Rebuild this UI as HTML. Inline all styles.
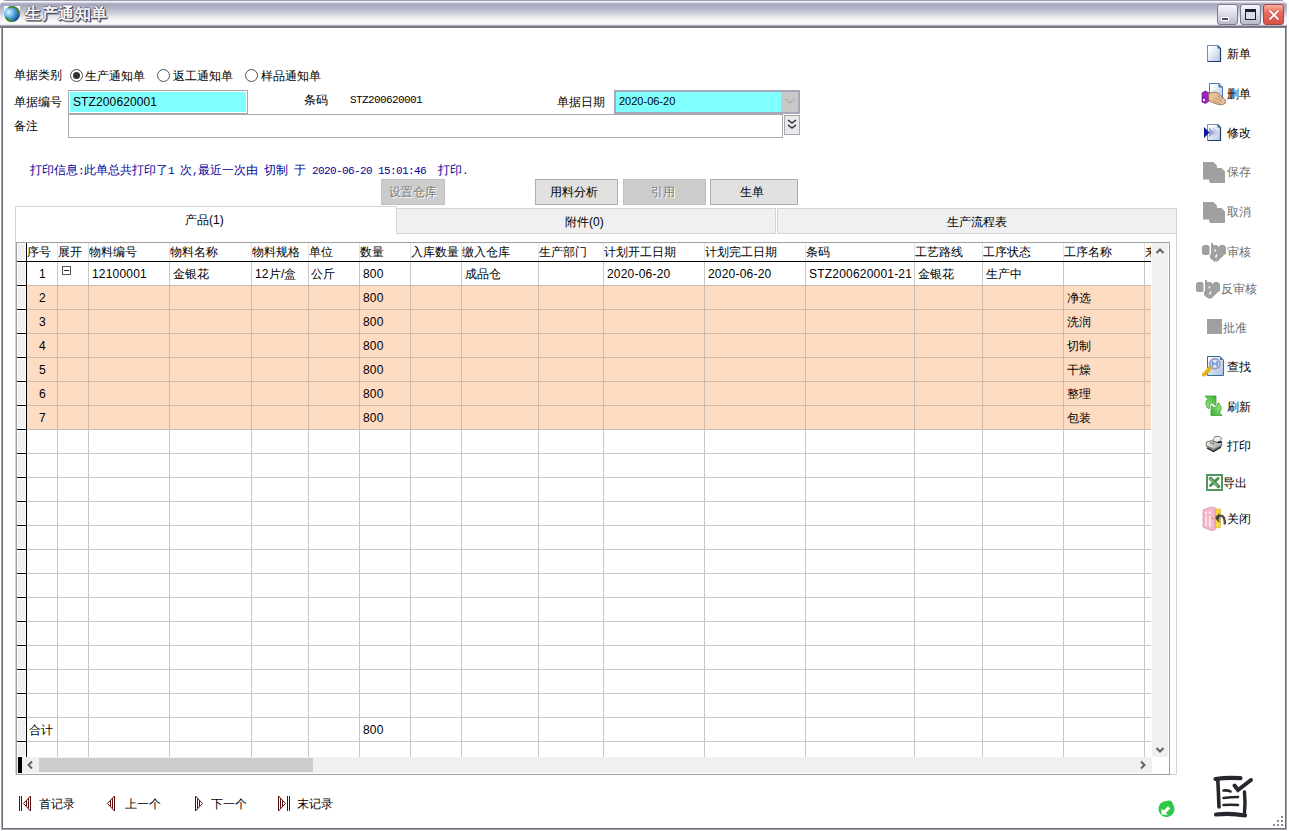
<!DOCTYPE html><html><head><meta charset="utf-8"><style>
html,body{margin:0;padding:0;width:1289px;height:831px;overflow:hidden;background:#fff}
body{position:relative;font-family:"Liberation Sans",sans-serif;font-size:12px;line-height:12px;color:#000}
body div{position:absolute;box-sizing:border-box}
.t{white-space:nowrap}
.m{font-family:"Liberation Mono",monospace;font-size:11px;letter-spacing:-0.6px}
svg{position:absolute;overflow:visible}
</style></head><body>
<div style="left:0px;top:0px;width:1287px;height:28px;background:linear-gradient(to bottom,#9c9caf 0.5px,#f6f6fa 1.5px,#d6d6e0 2.5px,#b6b6ca 3.5px,#a7a7bf 4.5px,#a9a9c0 5.5px,#adafc3 6.5px,#b3b6c9 8.5px,#bdc0cf 10.5px,#c9cbd7 12.5px,#d6d7df 14.5px,#e4e4ea 16.5px,#eeeef2 18.5px,#f6f6f7 20.5px,#fafafa 23.5px,#ebebef 24.5px,#b4b4c0 25.5px,#727282 26.5px,#7c7c8a 27.5px);border-radius:6px 6px 0 0"></div>
<div style="left:1px;top:28px;width:1px;height:802px;background:#a4a4b0"></div>
<div style="left:2px;top:27px;width:1px;height:802px;background:#6c6c7a"></div>
<div style="left:1285px;top:27px;width:1px;height:802px;background:#6c6c7a"></div>
<div style="left:1286px;top:28px;width:1px;height:802px;background:#a4a4b0"></div>
<div style="left:2px;top:828px;width:1284px;height:1px;background:#6c6c7a"></div>
<div style="left:1px;top:829px;width:1286px;height:1px;background:#a4a4b0"></div>
<svg style="left:4px;top:6px" width="16" height="16" viewBox="0 0 16 16">
<defs><radialGradient id="gl" cx="0.3" cy="0.38" r="0.75"><stop offset="0" stop-color="#dcf4ff"/><stop offset="0.5" stop-color="#4aa2e2"/><stop offset="1" stop-color="#0c3c7c"/></radialGradient></defs>
<rect x="0" y="0" width="16" height="16" fill="#fff"/>
<circle cx="8" cy="8" r="8" fill="url(#gl)"/>
<path d="M4.5 2 A6.9 6.9 0 0 1 14.9 8" stroke="#4a8a24" stroke-width="2" fill="none" opacity="0.9"/>
<path d="M1.8 11 A6.9 6.9 0 0 0 9 14.9" stroke="#4a8a24" stroke-width="2" fill="none" opacity="0.9"/>
</svg>
<div class="t" style="left:25px;top:6px;font-size:16px;line-height:16px;letter-spacing:0.6px;color:#fff;font-weight:normal;-webkit-text-stroke:0.5px #fff;text-shadow:1px 1px 0 #3c3c4c,1px 0 0 #3c3c4c,0 1px 0 #3c3c4c,-1px 0 0 #6a6a7a,0 -1px 0 #6a6a7a,2px 1px 0 #8a8a9a,1px 2px 0 #8a8a9a">生产通知单</div>
<div style="left:1217px;top:4px;width:21px;height:21px;border:1px solid #7a7a90;border-radius:3px;background:linear-gradient(to bottom,#f8f8fc,#dcdce8 50%,#b8b8cc)"><div style="left:3px;top:12px;width:6px;height:2px;background:#4a4a68;border:1px solid #fff;box-sizing:content-box"></div></div>
<div style="left:1240px;top:4px;width:21px;height:21px;border:1px solid #7a7a90;border-radius:3px;background:linear-gradient(to bottom,#f8f8fc,#dcdce8 50%,#b8b8cc)"><div style="left:4px;top:4px;width:11px;height:11px;border:1px solid #1a1a30;border-top-width:3px;background:#dcdce6"></div></div>
<div style="left:1263px;top:4px;width:21px;height:21px;border:1px solid #a04848;border-radius:3px;background:linear-gradient(to bottom,#ffb0a0,#e86a5c 40%,#d85048)"><svg style="left:3px;top:3px" width="14" height="14"><path d="M2.5 2.5 L11.5 11.5 M11.5 2.5 L2.5 11.5" stroke="#6a2020" stroke-width="3" opacity="0.35"/><path d="M2.5 2.5 L11.5 11.5 M11.5 2.5 L2.5 11.5" stroke="#fff" stroke-width="1.8"/></svg></div>
<div class="t" style="left:14px;top:69px;">单据类别</div>
<div style="left:70px;top:69px;width:13px;height:13px;border-radius:50%;border:1.2px solid #505050;background:#fff"><div style="left:2px;top:2px;width:7px;height:7px;border-radius:50%;background:#333"></div></div>
<div class="t" style="left:85px;top:70px;">生产通知单</div>
<div style="left:157px;top:69px;width:13px;height:13px;border-radius:50%;border:1.2px solid #505050;background:#fff"></div>
<div class="t" style="left:173px;top:70px;">返工通知单</div>
<div style="left:245px;top:69px;width:13px;height:13px;border-radius:50%;border:1.2px solid #505050;background:#fff"></div>
<div class="t" style="left:261px;top:70px;">样品通知单</div>
<div class="t" style="left:14px;top:96px;">单据编号</div>
<div style="left:68px;top:90px;width:180px;height:25px;background:#80ffff;border:1px solid #a8a8a8;border-bottom:2px solid #a8a8a8;box-shadow:inset 1px 1px 0 #fff,inset -1px -1px 0 #fff"></div>
<div class="t" style="left:73px;top:96px;letter-spacing:0.12px">STZ200620001</div>
<div class="t" style="left:304px;top:94px;">条码</div>
<div class="t" style="left:350px;top:93px;"><span class="m">STZ200620001</span></div>
<div class="t" style="left:557px;top:96px;">单据日期</div>
<div style="left:614px;top:90px;width:186px;height:24px;background:#80ffff;border:2px solid #a4a8b8"></div>
<div style="left:781px;top:92px;width:17px;height:20px;background:#c8c8c8"></div>
<svg style="left:784px;top:96px" width="12" height="10"><path d="M1 3 L6 7 L11 3" stroke="#a0a0a0" fill="none" stroke-width="1"/></svg>
<div class="t" style="left:619px;top:96px;font-size:11px;line-height:11px">2020-06-20</div>
<div class="t" style="left:14px;top:120px;">备注</div>
<div style="left:68px;top:114px;width:715px;height:24px;background:#fff;border:1px solid #a8a8a8"></div>
<div style="left:784px;top:115px;width:16px;height:20px;background:#e8e8ee;border:1px solid #a8a8a8"></div>
<svg style="left:786px;top:118px" width="12" height="14"><path d="M2 2 L6 5 L10 2 M2 7 L6 10 L10 7" stroke="#333" fill="none" stroke-width="1.5"/></svg>
<div class="t" style="left:30px;top:164px;color:#00009a">打印信息</div>
<div class="t" style="left:78px;top:164px;color:#00009a"><span class="m">:</span></div>
<div class="t" style="left:84px;top:164px;color:#00009a">此单总共打印了</div>
<div class="t" style="left:168px;top:164px;color:#00009a"><span class="m">1 </span></div>
<div class="t" style="left:180px;top:164px;color:#00009a">次</div>
<div class="t" style="left:192px;top:164px;color:#00009a"><span class="m">,</span></div>
<div class="t" style="left:198px;top:164px;color:#00009a">最近一次由</div>
<div class="t" style="left:264px;top:164px;color:#00009a">切制</div>
<div class="t" style="left:294px;top:164px;color:#00009a">于</div>
<div class="t" style="left:312px;top:164px;color:#00009a"><span class="m">2020-06-20</span></div>
<div class="t" style="left:378px;top:164px;color:#00009a"><span class="m">15:01:46</span></div>
<div class="t" style="left:438px;top:164px;color:#00009a">打印</div>
<div class="t" style="left:462px;top:164px;color:#00009a"><span class="m">.</span></div>
<div style="left:381px;top:179px;width:64px;height:26px;background:#cccccc;border:1px solid #bfbfbf"></div>
<div class="t" style="left:389px;top:186px;color:#7a7a7a;text-shadow:1px 1px #fff">设置仓库</div>
<div style="left:535px;top:179px;width:83px;height:26px;background:#e1e1e1;border:1px solid #adadad"></div>
<div class="t" style="left:550px;top:186px;">用料分析</div>
<div style="left:623px;top:179px;width:83px;height:26px;background:#cccccc;border:1px solid #bfbfbf"></div>
<div class="t" style="left:651px;top:186px;color:#7a7a7a;text-shadow:1px 1px #fff">引用</div>
<div style="left:710px;top:179px;width:88px;height:26px;background:#e1e1e1;border:1px solid #adadad"></div>
<div class="t" style="left:740px;top:186px;">生单</div>
<div style="left:15px;top:206px;width:382px;height:28px;background:#fff;border:1px solid #d4d4d4;border-bottom:none"></div>
<div style="left:396px;top:208px;width:380px;height:26px;background:#f0f0f0;border:1px solid #d4d4d4"></div>
<div style="left:777px;top:208px;width:400px;height:26px;background:#f0f0f0;border:1px solid #d4d4d4"></div>
<div style="left:15px;top:234px;width:1162px;height:541px;border:1px solid #d4d4d4;border-top:none"></div>
<div class="t" style="left:185px;top:214px;">产品(1)</div>
<div class="t" style="left:565px;top:216px;">附件(0)</div>
<div class="t" style="left:947px;top:216px;">生产流程表</div>
<div style="left:16px;top:242px;width:1154px;height:533px;border:1px solid #a0a0a0;background:#fff"></div>
<div style="left:27px;top:285px;width:1124px;height:145px;background:#fddcc2"></div>
<div style="left:27px;top:285px;width:1124px;height:1px;background:#ccbcb0"></div>
<div style="left:27px;top:309px;width:1124px;height:1px;background:#ccbcb0"></div>
<div style="left:27px;top:333px;width:1124px;height:1px;background:#ccbcb0"></div>
<div style="left:27px;top:357px;width:1124px;height:1px;background:#ccbcb0"></div>
<div style="left:27px;top:381px;width:1124px;height:1px;background:#ccbcb0"></div>
<div style="left:27px;top:405px;width:1124px;height:1px;background:#ccbcb0"></div>
<div style="left:27px;top:429px;width:1124px;height:1px;background:#ccbcb0"></div>
<div style="left:27px;top:453px;width:1124px;height:1px;background:#c8c8c8"></div>
<div style="left:27px;top:477px;width:1124px;height:1px;background:#c8c8c8"></div>
<div style="left:27px;top:501px;width:1124px;height:1px;background:#c8c8c8"></div>
<div style="left:27px;top:525px;width:1124px;height:1px;background:#c8c8c8"></div>
<div style="left:27px;top:549px;width:1124px;height:1px;background:#c8c8c8"></div>
<div style="left:27px;top:573px;width:1124px;height:1px;background:#c8c8c8"></div>
<div style="left:27px;top:597px;width:1124px;height:1px;background:#c8c8c8"></div>
<div style="left:27px;top:621px;width:1124px;height:1px;background:#c8c8c8"></div>
<div style="left:27px;top:645px;width:1124px;height:1px;background:#c8c8c8"></div>
<div style="left:27px;top:669px;width:1124px;height:1px;background:#c8c8c8"></div>
<div style="left:27px;top:693px;width:1124px;height:1px;background:#c8c8c8"></div>
<div style="left:27px;top:717px;width:1124px;height:1px;background:#c8c8c8"></div>
<div style="left:27px;top:741px;width:1124px;height:1px;background:#c8c8c8"></div>
<div style="left:57px;top:262px;width:1px;height:23px;background:#c8c8c8"></div>
<div style="left:57px;top:285px;width:1px;height:145px;background:#ccbcb0"></div>
<div style="left:57px;top:430px;width:1px;height:327px;background:#c8c8c8"></div>
<div style="left:57px;top:243px;width:1px;height:18px;background:#e4e4e4"></div>
<div style="left:88px;top:262px;width:1px;height:23px;background:#c8c8c8"></div>
<div style="left:88px;top:285px;width:1px;height:145px;background:#ccbcb0"></div>
<div style="left:88px;top:430px;width:1px;height:327px;background:#c8c8c8"></div>
<div style="left:88px;top:243px;width:1px;height:18px;background:#e4e4e4"></div>
<div style="left:169px;top:262px;width:1px;height:23px;background:#c8c8c8"></div>
<div style="left:169px;top:285px;width:1px;height:145px;background:#ccbcb0"></div>
<div style="left:169px;top:430px;width:1px;height:327px;background:#c8c8c8"></div>
<div style="left:169px;top:243px;width:1px;height:18px;background:#e4e4e4"></div>
<div style="left:251px;top:262px;width:1px;height:23px;background:#c8c8c8"></div>
<div style="left:251px;top:285px;width:1px;height:145px;background:#ccbcb0"></div>
<div style="left:251px;top:430px;width:1px;height:327px;background:#c8c8c8"></div>
<div style="left:251px;top:243px;width:1px;height:18px;background:#e4e4e4"></div>
<div style="left:308px;top:262px;width:1px;height:23px;background:#c8c8c8"></div>
<div style="left:308px;top:285px;width:1px;height:145px;background:#ccbcb0"></div>
<div style="left:308px;top:430px;width:1px;height:327px;background:#c8c8c8"></div>
<div style="left:308px;top:243px;width:1px;height:18px;background:#e4e4e4"></div>
<div style="left:359px;top:262px;width:1px;height:23px;background:#c8c8c8"></div>
<div style="left:359px;top:285px;width:1px;height:145px;background:#ccbcb0"></div>
<div style="left:359px;top:430px;width:1px;height:327px;background:#c8c8c8"></div>
<div style="left:359px;top:243px;width:1px;height:18px;background:#e4e4e4"></div>
<div style="left:410px;top:262px;width:1px;height:23px;background:#c8c8c8"></div>
<div style="left:410px;top:285px;width:1px;height:145px;background:#ccbcb0"></div>
<div style="left:410px;top:430px;width:1px;height:327px;background:#c8c8c8"></div>
<div style="left:410px;top:243px;width:1px;height:18px;background:#e4e4e4"></div>
<div style="left:461px;top:262px;width:1px;height:23px;background:#c8c8c8"></div>
<div style="left:461px;top:285px;width:1px;height:145px;background:#ccbcb0"></div>
<div style="left:461px;top:430px;width:1px;height:327px;background:#c8c8c8"></div>
<div style="left:461px;top:243px;width:1px;height:18px;background:#e4e4e4"></div>
<div style="left:538px;top:262px;width:1px;height:23px;background:#c8c8c8"></div>
<div style="left:538px;top:285px;width:1px;height:145px;background:#ccbcb0"></div>
<div style="left:538px;top:430px;width:1px;height:327px;background:#c8c8c8"></div>
<div style="left:538px;top:243px;width:1px;height:18px;background:#e4e4e4"></div>
<div style="left:603px;top:262px;width:1px;height:23px;background:#c8c8c8"></div>
<div style="left:603px;top:285px;width:1px;height:145px;background:#ccbcb0"></div>
<div style="left:603px;top:430px;width:1px;height:327px;background:#c8c8c8"></div>
<div style="left:603px;top:243px;width:1px;height:18px;background:#e4e4e4"></div>
<div style="left:704px;top:262px;width:1px;height:23px;background:#c8c8c8"></div>
<div style="left:704px;top:285px;width:1px;height:145px;background:#ccbcb0"></div>
<div style="left:704px;top:430px;width:1px;height:327px;background:#c8c8c8"></div>
<div style="left:704px;top:243px;width:1px;height:18px;background:#e4e4e4"></div>
<div style="left:805px;top:262px;width:1px;height:23px;background:#c8c8c8"></div>
<div style="left:805px;top:285px;width:1px;height:145px;background:#ccbcb0"></div>
<div style="left:805px;top:430px;width:1px;height:327px;background:#c8c8c8"></div>
<div style="left:805px;top:243px;width:1px;height:18px;background:#e4e4e4"></div>
<div style="left:914px;top:262px;width:1px;height:23px;background:#c8c8c8"></div>
<div style="left:914px;top:285px;width:1px;height:145px;background:#ccbcb0"></div>
<div style="left:914px;top:430px;width:1px;height:327px;background:#c8c8c8"></div>
<div style="left:914px;top:243px;width:1px;height:18px;background:#e4e4e4"></div>
<div style="left:982px;top:262px;width:1px;height:23px;background:#c8c8c8"></div>
<div style="left:982px;top:285px;width:1px;height:145px;background:#ccbcb0"></div>
<div style="left:982px;top:430px;width:1px;height:327px;background:#c8c8c8"></div>
<div style="left:982px;top:243px;width:1px;height:18px;background:#e4e4e4"></div>
<div style="left:1063px;top:262px;width:1px;height:23px;background:#c8c8c8"></div>
<div style="left:1063px;top:285px;width:1px;height:145px;background:#ccbcb0"></div>
<div style="left:1063px;top:430px;width:1px;height:327px;background:#c8c8c8"></div>
<div style="left:1063px;top:243px;width:1px;height:18px;background:#e4e4e4"></div>
<div style="left:1144px;top:262px;width:1px;height:23px;background:#c8c8c8"></div>
<div style="left:1144px;top:285px;width:1px;height:145px;background:#ccbcb0"></div>
<div style="left:1144px;top:430px;width:1px;height:327px;background:#c8c8c8"></div>
<div style="left:1144px;top:243px;width:1px;height:18px;background:#e4e4e4"></div>
<div style="left:17px;top:261px;width:1134px;height:1px;background:#000"></div>
<div style="left:26px;top:243px;width:1px;height:514px;background:#000"></div>
<div style="left:17px;top:243px;width:9px;height:18px;background:#efefef;border:1px solid #fff"></div>
<div style="left:17px;top:262px;width:9px;height:23px;background:#efefef;border:1px solid #fff"></div>
<div style="left:17px;top:285px;width:9px;height:1px;background:#000"></div>
<div style="left:17px;top:286px;width:9px;height:23px;background:#efefef;border:1px solid #fff"></div>
<div style="left:17px;top:309px;width:9px;height:1px;background:#000"></div>
<div style="left:17px;top:310px;width:9px;height:23px;background:#efefef;border:1px solid #fff"></div>
<div style="left:17px;top:333px;width:9px;height:1px;background:#000"></div>
<div style="left:17px;top:334px;width:9px;height:23px;background:#efefef;border:1px solid #fff"></div>
<div style="left:17px;top:357px;width:9px;height:1px;background:#000"></div>
<div style="left:17px;top:358px;width:9px;height:23px;background:#efefef;border:1px solid #fff"></div>
<div style="left:17px;top:381px;width:9px;height:1px;background:#000"></div>
<div style="left:17px;top:382px;width:9px;height:23px;background:#efefef;border:1px solid #fff"></div>
<div style="left:17px;top:405px;width:9px;height:1px;background:#000"></div>
<div style="left:17px;top:406px;width:9px;height:23px;background:#efefef;border:1px solid #fff"></div>
<div style="left:17px;top:429px;width:9px;height:1px;background:#000"></div>
<div style="left:17px;top:430px;width:9px;height:23px;background:#efefef;border:1px solid #fff"></div>
<div style="left:17px;top:453px;width:9px;height:1px;background:#000"></div>
<div style="left:17px;top:454px;width:9px;height:23px;background:#efefef;border:1px solid #fff"></div>
<div style="left:17px;top:477px;width:9px;height:1px;background:#000"></div>
<div style="left:17px;top:478px;width:9px;height:23px;background:#efefef;border:1px solid #fff"></div>
<div style="left:17px;top:501px;width:9px;height:1px;background:#000"></div>
<div style="left:17px;top:502px;width:9px;height:23px;background:#efefef;border:1px solid #fff"></div>
<div style="left:17px;top:525px;width:9px;height:1px;background:#000"></div>
<div style="left:17px;top:526px;width:9px;height:23px;background:#efefef;border:1px solid #fff"></div>
<div style="left:17px;top:549px;width:9px;height:1px;background:#000"></div>
<div style="left:17px;top:550px;width:9px;height:23px;background:#efefef;border:1px solid #fff"></div>
<div style="left:17px;top:573px;width:9px;height:1px;background:#000"></div>
<div style="left:17px;top:574px;width:9px;height:23px;background:#efefef;border:1px solid #fff"></div>
<div style="left:17px;top:597px;width:9px;height:1px;background:#000"></div>
<div style="left:17px;top:598px;width:9px;height:23px;background:#efefef;border:1px solid #fff"></div>
<div style="left:17px;top:621px;width:9px;height:1px;background:#000"></div>
<div style="left:17px;top:622px;width:9px;height:23px;background:#efefef;border:1px solid #fff"></div>
<div style="left:17px;top:645px;width:9px;height:1px;background:#000"></div>
<div style="left:17px;top:646px;width:9px;height:23px;background:#efefef;border:1px solid #fff"></div>
<div style="left:17px;top:669px;width:9px;height:1px;background:#000"></div>
<div style="left:17px;top:670px;width:9px;height:23px;background:#efefef;border:1px solid #fff"></div>
<div style="left:17px;top:693px;width:9px;height:1px;background:#000"></div>
<div style="left:17px;top:694px;width:9px;height:23px;background:#efefef;border:1px solid #fff"></div>
<div style="left:17px;top:717px;width:9px;height:1px;background:#000"></div>
<div style="left:17px;top:718px;width:9px;height:23px;background:#efefef;border:1px solid #fff"></div>
<div style="left:17px;top:741px;width:9px;height:1px;background:#000"></div>
<div style="left:17px;top:742px;width:9px;height:15px;background:#efefef;border:1px solid #fff"></div>
<div class="t" style="left:27px;top:246px;overflow:hidden">序号</div>
<div class="t" style="left:58px;top:246px;overflow:hidden">展开</div>
<div class="t" style="left:89px;top:246px;overflow:hidden">物料编号</div>
<div class="t" style="left:170px;top:246px;overflow:hidden">物料名称</div>
<div class="t" style="left:252px;top:246px;overflow:hidden">物料规格</div>
<div class="t" style="left:309px;top:246px;overflow:hidden">单位</div>
<div class="t" style="left:360px;top:246px;overflow:hidden">数量</div>
<div class="t" style="left:411px;top:246px;overflow:hidden">入库数量</div>
<div class="t" style="left:462px;top:246px;overflow:hidden">缴入仓库</div>
<div class="t" style="left:539px;top:246px;overflow:hidden">生产部门</div>
<div class="t" style="left:604px;top:246px;overflow:hidden">计划开工日期</div>
<div class="t" style="left:705px;top:246px;overflow:hidden">计划完工日期</div>
<div class="t" style="left:806px;top:246px;overflow:hidden">条码</div>
<div class="t" style="left:915px;top:246px;overflow:hidden">工艺路线</div>
<div class="t" style="left:983px;top:246px;overflow:hidden">工序状态</div>
<div class="t" style="left:1064px;top:246px;overflow:hidden">工序名称</div>
<div class="t" style="left:1145px;top:246px;overflow:hidden">来</div>
<div class="t" style="left:39px;top:268px;">1</div>
<div style="left:62px;top:266px;width:9px;height:9px;border:1px solid #555;background:#fff"></div>
<div style="left:64px;top:270px;width:5px;height:1px;background:#222"></div>
<div class="t" style="left:92px;top:268px;letter-spacing:0.2px;">12100001</div>
<div class="t" style="left:173px;top:268px;letter-spacing:0.2px;">金银花</div>
<div class="t" style="left:255px;top:268px;letter-spacing:0.2px;">12片/盒</div>
<div class="t" style="left:311px;top:268px;letter-spacing:0.2px;">公斤</div>
<div class="t" style="left:363px;top:268px;letter-spacing:0.2px;">800</div>
<div class="t" style="left:465px;top:268px;letter-spacing:0.2px;">成品仓</div>
<div class="t" style="left:607px;top:268px;letter-spacing:0.2px;">2020-06-20</div>
<div class="t" style="left:708px;top:268px;letter-spacing:0.2px;">2020-06-20</div>
<div class="t" style="left:809px;top:268px;letter-spacing:0.2px;">STZ200620001-21</div>
<div class="t" style="left:918px;top:268px;letter-spacing:0.2px;">金银花</div>
<div class="t" style="left:986px;top:268px;letter-spacing:0.2px;">生产中</div>
<div class="t" style="left:39px;top:292px;">2</div>
<div class="t" style="left:363px;top:292px;letter-spacing:0.2px;">800</div>
<div class="t" style="left:1067px;top:292px;letter-spacing:0.2px;">净选</div>
<div class="t" style="left:39px;top:316px;">3</div>
<div class="t" style="left:363px;top:316px;letter-spacing:0.2px;">800</div>
<div class="t" style="left:1067px;top:316px;letter-spacing:0.2px;">洗润</div>
<div class="t" style="left:39px;top:340px;">4</div>
<div class="t" style="left:363px;top:340px;letter-spacing:0.2px;">800</div>
<div class="t" style="left:1067px;top:340px;letter-spacing:0.2px;">切制</div>
<div class="t" style="left:39px;top:364px;">5</div>
<div class="t" style="left:363px;top:364px;letter-spacing:0.2px;">800</div>
<div class="t" style="left:1067px;top:364px;letter-spacing:0.2px;">干燥</div>
<div class="t" style="left:39px;top:388px;">6</div>
<div class="t" style="left:363px;top:388px;letter-spacing:0.2px;">800</div>
<div class="t" style="left:1067px;top:388px;letter-spacing:0.2px;">整理</div>
<div class="t" style="left:39px;top:412px;">7</div>
<div class="t" style="left:363px;top:412px;letter-spacing:0.2px;">800</div>
<div class="t" style="left:1067px;top:412px;letter-spacing:0.2px;">包装</div>
<div class="t" style="left:29px;top:724px;">合计</div>
<div class="t" style="left:363px;top:724px;letter-spacing:0.2px;">800</div>
<div style="left:1151px;top:243px;width:1px;height:514px;background:#fff"></div>
<div style="left:1152px;top:243px;width:16px;height:514px;background:#f0f0f0"></div>
<svg style="left:1155px;top:247px" width="10" height="8"><path d="M1.5 6 L5 2.5 L8.5 6" stroke="#606060" fill="none" stroke-width="2"/></svg>
<svg style="left:1155px;top:746px" width="10" height="8"><path d="M1.5 2 L5 5.5 L8.5 2" stroke="#606060" fill="none" stroke-width="2"/></svg>
<div style="left:17px;top:757px;width:1135px;height:16px;background:#f0f0f0"></div>
<div style="left:18px;top:757px;width:4px;height:16px;background:#000"></div>
<div style="left:39px;top:758px;width:274px;height:14px;background:#cdcdcd"></div>
<svg style="left:26px;top:760px" width="8" height="10"><path d="M6 1.5 L2.5 5 L6 8.5" stroke="#606060" fill="none" stroke-width="2"/></svg>
<svg style="left:1139px;top:760px" width="8" height="10"><path d="M2 1.5 L5.5 5 L2 8.5" stroke="#606060" fill="none" stroke-width="2"/></svg>
<svg style="left:14px;top:790px" width="30" height="26"><path d="M5.5 6 V21 M7.5 6 V21" stroke="#141a6a" stroke-width="1"/><path d="M16.5 6 V21 L9.5 13.5 Z M14.5 8.5 V18.5 M12.5 10.5 V16.5" stroke="#5a0c0c" fill="none" stroke-width="1"/></svg>
<div class="t" style="left:39px;top:798px;">首记录</div>
<svg style="left:100px;top:790px" width="30" height="26"><path d="M14.5 6 V21 L7.5 13.5 Z M12.5 8.5 V18.5 M10.5 10.5 V16.5" stroke="#5a0c0c" fill="none" stroke-width="1"/></svg>
<div class="t" style="left:125px;top:798px;">上一个</div>
<svg style="left:190px;top:790px" width="30" height="26"><path d="M5.5 6 V21 L12.5 13.5 Z M7.5 8.5 V18.5 M9.5 10.5 V16.5" stroke="#5a0c0c" fill="none" stroke-width="1"/></svg>
<div class="t" style="left:211px;top:798px;">下一个</div>
<svg style="left:270px;top:790px" width="30" height="26"><path d="M8.5 6 V21 L15.5 13.5 Z M10.5 8.5 V18.5 M12.5 10.5 V16.5" stroke="#5a0c0c" fill="none" stroke-width="1"/><path d="M17.5 6 V21 M19.5 6 V21" stroke="#141a6a" stroke-width="1"/></svg>
<div class="t" style="left:297px;top:798px;">末记录</div>
<svg style="left:1200px;top:40px" width="28" height="26" viewBox="0 0 28 26">
<defs><linearGradient id="pg" x1="0" y1="0" x2="1" y2="1"><stop offset="0.2" stop-color="#ffffff"/><stop offset="1" stop-color="#b0c4e4"/></linearGradient></defs>
<path d="M7.5 5.5 H17.5 L20.5 8.5 V21.5 H7.5 Z" fill="url(#pg)"/>
<path d="M7.5 21.5 V5.5 H17.5" stroke="#7290b4" stroke-width="1" fill="none"/>
<path d="M17.5 5.5 L20.5 8.5 V21.5 H7.5" stroke="#1c3c6c" stroke-width="1.2" fill="none"/>
<path d="M17.5 5.5 V8.5 H20.5 Z" fill="#3a6aa0"/>
</svg>
<div class="t" style="left:1227px;top:48px;">新单</div>
<svg style="left:1198px;top:80px" width="30" height="28" viewBox="0 0 30 28">
<path d="M11.5 3.5 H21 L24.5 7 V17 H11.5 Z" fill="url(#pg)" stroke="#4a7ab0" stroke-width="1"/>
<path d="M21 3.5 V7 H24.5" fill="#9ab8d8" stroke="#2a5a8a" stroke-width="1"/>
<path d="M4 13 L7 11 L10.5 12.5 L11 21 L7.5 23.5 L4 22 Z" fill="#a020c8" stroke="#500070" stroke-width="0.6"/>
<rect x="5" y="19" width="2" height="2" fill="#fff"/>
<path d="M10.5 13.5 L16 12 Q19 12 21 14 L26.5 19 Q28.5 21.5 27 23.5 L24.5 24.8 Q20 25 17 23.5 L12 21.5 L10.5 19.5 Z" fill="#e8c098" stroke="#7a5838" stroke-width="0.7"/>
<path d="M17 18 L24 21.5 M15 20.5 L22 23.5 M19 15.5 L25 19" stroke="#9a7050" stroke-width="0.6"/>
</svg>
<div class="t" style="left:1227px;top:88px;">删单</div>
<svg style="left:1200px;top:120px" width="28" height="26" viewBox="0 0 28 26">
<path d="M7.5 4.5 H17.5 L20.5 7.5 V20.5 H7.5 Z" fill="url(#pg)"/>
<path d="M7.5 20.5 V4.5 H17.5" stroke="#7290b4" stroke-width="1" fill="none"/>
<path d="M17.5 4.5 L20.5 7.5 V20.5 H7.5" stroke="#1c3c6c" stroke-width="1.2" fill="none"/>
<path d="M17.5 4.5 V7.5 H20.5 Z" fill="#3a6aa0"/>
<path d="M13 7 L18.5 12.5 L13 17.5 Z" fill="#c8cce8"/>
<path d="M9 7 L14.5 12.5 L9 17.5 Z" fill="#9ea4d8"/>
<path d="M4 7 L9.5 12.5 L4 18 Z" fill="#0c1a9a"/>
</svg>
<div class="t" style="left:1227px;top:127px;">修改</div>
<svg style="left:1203px;top:162px" width="23" height="21" viewBox="0 0 23 21">
<path d="M0 0 H10.5 L14 3.5 V6 H18.5 L22 9.5 V21 H7 L6 18.5 V17.5 H0 Z" fill="#a0a0a0"/>
</svg>
<svg style="left:1203px;top:202px" width="23" height="21" viewBox="0 0 23 21">
<path d="M0 0 H10.5 L14 3.5 V6 H18.5 L22 9.5 V21 H7 L6 18.5 V17.5 H0 Z" fill="#a0a0a0"/>
</svg>
<div class="t" style="left:1227px;top:166px;color:#6e6e6e">保存</div>
<div class="t" style="left:1227px;top:206px;color:#6e6e6e">取消</div>
<svg style="left:1202px;top:243px" width="24" height="19" viewBox="0 0 24 19">
<g fill="#a0a0a0">
<path d="M2 2 H6 L7.5 3.5 V11 L6.5 12 H1.5 L0 10.5 V3.5 Z"/>
<path d="M9 0 H11 V2 H15 L16.5 4 L18.5 2 H22 L24 4 V11 L22 12 L15.5 18.5 H12 L8 15 V12 L9 11 Z"/>
</g>
<g fill="#fff"><path d="M12.5 6.5 H14.5 L13.5 8.5 H12.5 Z"/><path d="M14 11.5 H15.5 L14.5 14.5 H13 Z"/></g>
</svg>
<div class="t" style="left:1227px;top:246px;color:#6e6e6e">审核</div>
<svg style="left:1196px;top:280px" width="24" height="19" viewBox="0 0 24 19">
<g fill="#a0a0a0">
<path d="M2 2 H6 L7.5 3.5 V11 L6.5 12 H1.5 L0 10.5 V3.5 Z"/>
<path d="M9 0 H11 V2 H15 L16.5 4 L18.5 2 H22 L24 4 V11 L22 12 L15.5 18.5 H12 L8 15 V12 L9 11 Z"/>
</g>
<g fill="#fff"><path d="M12.5 6.5 H14.5 L13.5 8.5 H12.5 Z"/><path d="M14 11.5 H15.5 L14.5 14.5 H13 Z"/></g>
</svg>
<div class="t" style="left:1221px;top:283px;color:#6e6e6e">反审核</div>
<div style="left:1207px;top:319px;width:15px;height:15px;background:#a0a0a0"></div>
<div class="t" style="left:1223px;top:322px;color:#6e6e6e">批准</div>
<svg style="left:1198px;top:352px" width="30" height="30" viewBox="0 0 30 30">
<defs><linearGradient id="pg2" x1="0" y1="0" x2="1" y2="1"><stop offset="0" stop-color="#ffffff"/><stop offset="1" stop-color="#a8c0dc"/></linearGradient></defs>
<path d="M9.5 4.5 H22 L25.5 8 V23.5 H9.5 Z" fill="url(#pg2)" stroke="#3a6a9a" stroke-width="1"/>
<path d="M22 4.5 V8 H25.5 Z" fill="#4a80b8"/>
<circle cx="16.8" cy="11.8" r="5" fill="#dde6f8" stroke="#9a9ac4" stroke-width="1.8"/>
<path d="M14.6 9 V14.6 M19 9 V14.6 M14.6 11.8 H19" stroke="#6f96d0" stroke-width="1.6"/>
<path d="M11.5 16.5 L6 22.5" stroke="#e0b020" stroke-width="4.2" stroke-linecap="round"/>
<path d="M10 16 L4.5 22" stroke="#fff0a0" stroke-width="0.8" opacity="0.7"/>
</svg>
<div class="t" style="left:1227px;top:361px;">查找</div>
<svg style="left:1200px;top:392px" width="28" height="28" viewBox="0 0 28 28">
<defs><linearGradient id="gr1" x1="0" y1="1" x2="1" y2="0"><stop offset="0" stop-color="#a0f090"/><stop offset="1" stop-color="#38b030"/></linearGradient>
<linearGradient id="gr2" x1="0" y1="1" x2="1" y2="0"><stop offset="0" stop-color="#38b030"/><stop offset="1" stop-color="#a0f090"/></linearGradient></defs>
<path d="M5 4 L16 4 L16 13.5 L14.5 13 L13 11.5 L11.5 11 L10 12 L9 16.5 L8 16.5 L6 13 L6 9 L8 7.5 Z" fill="url(#gr1)" stroke="#3c9a34" stroke-width="0.8"/>
<path d="M11 14 L12.5 14 L14 15.5 L15.5 15.5 L17 14 L18 11 L19 11 L21 15 L21 18.5 L19 20 L22 23.5 L11 23.5 Z" fill="url(#gr2)" stroke="#3c9a34" stroke-width="0.8"/>
</svg>
<div class="t" style="left:1227px;top:401px;">刷新</div>
<svg style="left:1200px;top:430px" width="28" height="28" viewBox="0 0 28 28">
<defs><linearGradient id="prb" x1="0" y1="0" x2="1" y2="1"><stop offset="0" stop-color="#ffffff"/><stop offset="1" stop-color="#888"/></linearGradient></defs>
<path d="M12.5 10.5 L15 6.3 L19.5 6.5 L22 8.5 L18 13 Z" fill="#eee" stroke="#666" stroke-width="0.8"/>
<path d="M6.3 12 L11 10.7 L17.5 12.5 L21.7 11.7 L21.7 16 L14 19.8 L6.3 16.5 Z" fill="url(#prb)" stroke="#555" stroke-width="0.8"/>
<path d="M17.5 12.5 L21.7 11.7" stroke="#111" stroke-width="1.4"/>
<path d="M7 17.8 L13.5 21.3 L20.8 17.2" stroke="#222" stroke-width="1.5" fill="none"/>
<path d="M7.5 16.3 L13.8 19.5 L21 15.8" stroke="#777" stroke-width="0.8" fill="none"/>
<circle cx="10.8" cy="12.8" r="1" fill="#40b040"/><circle cx="13.2" cy="13.4" r="1" fill="#c03040"/>
</svg>
<div class="t" style="left:1227px;top:440px;">打印</div>
<svg style="left:1206px;top:474px" width="17" height="17" viewBox="0 0 17 17">
<rect x="1" y="1" width="15" height="15" fill="#fff" stroke="#2a7a34" stroke-width="2" opacity="0.85"/>
<rect x="1" y="1" width="15" height="15" fill="none" stroke="#c8e8c8" stroke-width="0.6" stroke-dasharray="0.7 1.3"/>
<path d="M4.5 4.5 L12.5 12.5" stroke="#3a8a40" stroke-width="3.6" stroke-linecap="round" opacity="0.9"/>
<path d="M12 4.5 L4.5 11.5" stroke="#3a8a40" stroke-width="3" stroke-linecap="round" opacity="0.9"/>
<path d="M4 4.5 L11.5 12" stroke="#e8f8e8" stroke-width="0.7"/>
</svg>
<div class="t" style="left:1223px;top:477px;">导出</div>
<svg style="left:1198px;top:502px" width="32" height="32" viewBox="0 0 32 32">
<path d="M17 7 L22.5 7 L22.5 25.5 L17 26 Z" fill="#f4d848" stroke="#c8a820" stroke-width="0.6"/>
<path d="M17.5 15.5 L21.5 12 M18 16.5 L21.5 20" stroke="#5a4a10" stroke-width="1.2"/>
<path d="M5 8 L12.5 5 L17 5.5 L17 28 L13 28.5 L5 25 Z" fill="#f0b8c8" stroke="#d890a8" stroke-width="0.7"/>
<path d="M7 10 H9 V12.5 H7 Z M11 9.5 H13 V12 H11 Z M7 14.5 H9 V24 H7 Z M11 14 H13 V25 H11 Z" fill="#ffe0ea"/>
<path d="M12.5 16.5 L14 15.5 L15.5 16.5 L14 17.5 Z" fill="#e0a020"/>
<path d="M18.5 16 Q21 13.5 24 14 Q27 15 26.8 22.5" stroke="#505058" stroke-width="2.4" fill="none"/>
<path d="M17.5 16.5 L21 13 L21.5 18 Z" fill="#404048"/>
</svg>
<div class="t" style="left:1227px;top:513px;">关闭</div>
<svg style="left:1158px;top:800px" width="18" height="18" viewBox="0 0 18 18">
<circle cx="8.5" cy="9" r="8" fill="#2ec846"/>
<circle cx="11" cy="4" r="3.5" fill="#2ec846"/>
<path d="M3.5 14.5 L3.5 8.5 L5.6 10.6 L10 6.2 L12.3 8.5 L7.9 12.9 L10 15 Z" fill="#fff"/>
</svg>
<svg style="left:1213px;top:775px" width="42" height="42" viewBox="0 0 42 42">
<g stroke="#26262c" stroke-linecap="round" fill="none">
<path d="M2.5 4 Q14 2.2 27.5 3.2" stroke-width="4.2"/>
<path d="M4.8 5 Q5.6 20 6 32" stroke-width="3.6"/>
<path d="M3 39.5 Q18 38 32 40.5" stroke-width="4.2"/>
<path d="M31.5 17 Q32.5 28 31.5 38" stroke-width="3.4"/>
<path d="M10.5 15.5 Q15 15 17.5 16.5" stroke-width="2.6"/>
<path d="M10.5 23 Q18 22 25 22" stroke-width="2.6"/>
<path d="M10.5 30 Q18 29.5 25 30" stroke-width="2.6"/>
<path d="M21.5 10.5 L25 15 L38 5" stroke-width="4"/>
</g></svg>
<div style="left:1281px;top:816px;width:2px;height:2px;background:#8a8a96"></div>
<div style="left:1277px;top:820px;width:2px;height:2px;background:#8a8a96"></div>
<div style="left:1281px;top:820px;width:2px;height:2px;background:#8a8a96"></div>
<div style="left:1273px;top:824px;width:2px;height:2px;background:#8a8a96"></div>
<div style="left:1277px;top:824px;width:2px;height:2px;background:#8a8a96"></div>
<div style="left:1281px;top:824px;width:2px;height:2px;background:#8a8a96"></div>
</body></html>
